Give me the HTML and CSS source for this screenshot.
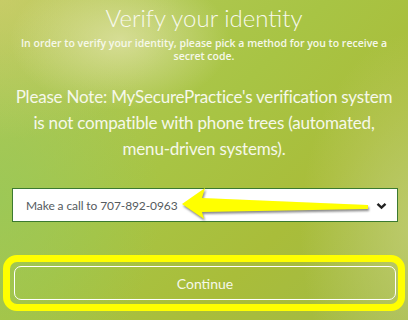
FILE: index.html
```html
<!DOCTYPE html>
<html lang="en">
<head>
  <meta charset="UTF-8" />
  <title>Verify your identity</title>
  <link rel="stylesheet" href="styles.css">
</head>
<body>
  <div class="page">
    <h1>Verify your identity</h1>
    <p class="lead">In order to verify your identity, please pick a method for you to receive a secret code.</p>

    <p class="note">Please Note: MySecurePractice's verification system is not compatible with phone trees (automated, menu-driven systems).</p>

    <div class="select-wrap">
      <div class="select">
        <span>Make a call to 707-892-0963</span>
        <svg class="chevron" width="11" height="8" viewBox="0 0 11 8">
          <path d="M1.5 1.8 L5.5 5.6 L9.5 1.8" fill="none" stroke="#222" stroke-width="2.4"/>
        </svg>
      </div>
      <!-- annotation arrow -->
      <svg class="arrow" width="200" height="42" viewBox="0 0 200 42">
        <polygon points="4,20 27,4 24,14 190,21 190,25 24,28 26,35" fill="#ffff00"/>
      </svg>
    </div>

    <div class="highlight">
      <button class="continue">Continue</button>
    </div>
  </div>
</body>
</html>
```

FILE: styles.css
```css
html, body {
  margin: 0;
  height: 100%;
}

body {
  font-family: Lato, "Open Sans", sans-serif;
  color: #f6f8ea;
  overflow: hidden;
  background:
    radial-gradient(ellipse 110px 70px at 120px 40px, rgba(225, 228, 170, 0.75), rgba(225, 228, 170, 0) 100%),
    radial-gradient(ellipse 180px 140px at 0px 0px, rgba(210, 205, 110, 0.6), rgba(210, 205, 110, 0) 100%),
    radial-gradient(ellipse 120px 200px at 420px 230px, rgba(200, 210, 130, 0.7), rgba(200, 210, 130, 0) 100%),
    radial-gradient(ellipse 160px 200px at 0px 200px, rgba(150, 200, 90, 0.7), rgba(150, 200, 90, 0) 100%),
    linear-gradient(135deg, #b5cb5c 0%, #a8c444 45%, #a9bd3a 70%, #a2b945 100%);
}

.page {
  padding: 3px 10px 0;
  text-align: center;
}

h1 {
  margin: 0;
  font-size: 24px;
  font-weight: 300;
  line-height: 30px;
  color: #f8f9ee;
}

.lead {
  margin: 4px 0 0;
  font-family: "Open Sans", sans-serif;
  font-size: 10.5px;
  font-weight: 600;
  line-height: 13px;
}

.note {
  width: 384px;
  margin: 21px auto 0;
  font-size: 17px;
  letter-spacing: -0.2px;
  line-height: 26px;
}

.select-wrap {
  position: relative;
  margin: 26px 0 0 2px;
}

.select {
  display: flex;
  align-items: center;
  justify-content: space-between;
  height: 32px;
  padding: 0 10px 0 13px;
  background: #fff;
  border: 1px solid #3b7a30;
  color: #555b60;
  font-size: 12px;
  letter-spacing: -0.1px;
  text-align: left;
}

.chevron {
  margin-top: 1px;
}

.arrow {
  position: absolute;
  left: 166px;
  top: -4px;
  filter: drop-shadow(1px 2px 1.2px rgba(40, 40, 40, 0.55));
}

.highlight {
  margin: 33px -7px 0;
  border: 7px solid #ffff00;
  border-radius: 14px;
  padding: 4px 2px 4px 4px;
}

.continue {
  display: block;
  width: 100%;
  height: 34px;
  background: transparent;
  border: 1.5px solid #fff;
  border-radius: 7px;
  color: #f6f8ea;
  font-family: Lato, sans-serif;
  font-size: 14px;
}
```
